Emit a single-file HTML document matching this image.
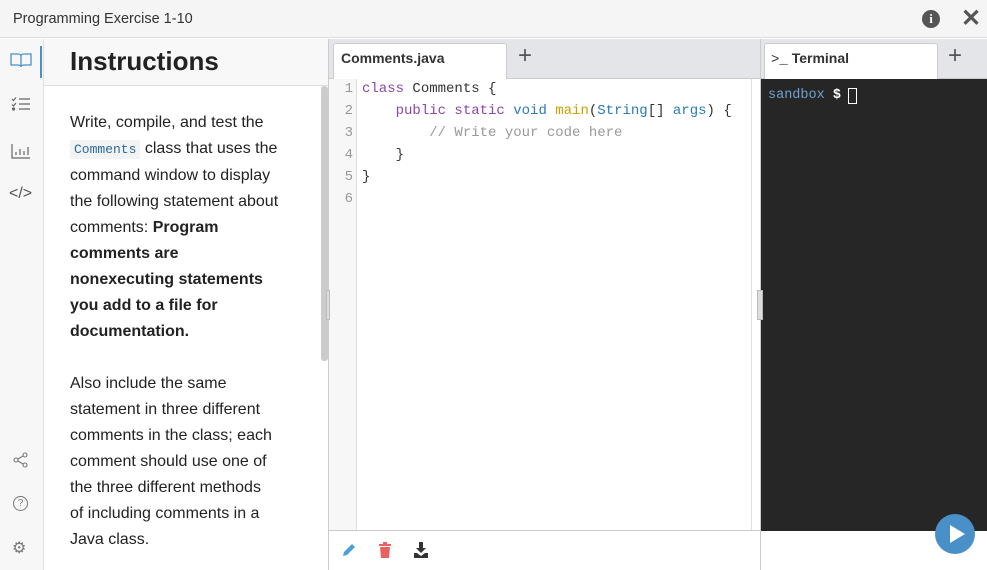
<!DOCTYPE html>
<html><head><style>
*{margin:0;padding:0;box-sizing:border-box}
body{width:987px;height:570px;overflow:hidden;background:#fff;font-family:"Liberation Sans",sans-serif;position:relative;color:#222}
.abs{position:absolute}
.mono{font-family:"Liberation Mono",monospace}
</style></head><body>
<div class="abs" style="left:0;top:0;width:987px;height:38px;background:#f5f5f5;border-bottom:1px solid #ddd"></div>
<div class="abs" style="left:13px;top:11px;font-size:14.5px;color:#333">Programming Exercise 1-10</div>
<div class="abs" style="left:922px;top:10px;width:18px;height:18px;border-radius:50%;background:#555;color:#fff;font-size:13px;font-weight:bold;text-align:center;line-height:18px;font-family:'Liberation Serif',serif">i</div>
<div class="abs" style="left:961px;top:4px;font-size:24px;font-weight:bold;color:#555">✕</div>
<div class="abs" style="left:0;top:39px;width:44px;height:531px;background:#f7f7f7;border-right:1px solid #e2e2e2"></div>
<div class="abs" style="left:40px;top:46px;width:2px;height:32px;background:#4a90c8"></div>
<svg class="abs" style="left:10px;top:52px" width="22" height="16" viewBox="0 0 22 16" fill="none" stroke="#4a90c8" stroke-width="1.3"><path d="M1 2h7c2 0 3 1 3 2v11c0-1-1-2-3-2H1z M21 2h-7c-2 0-3 1-3 2v11c0-1 1-2 3-2h7z"/></svg>
<svg class="abs" style="left:11px;top:96px" width="20" height="16" viewBox="0 0 20 16" fill="none" stroke="#666" stroke-width="1.2"><path d="M1 3l1.5 1.5L5 1.5M1 8.5l1.5 1.5L5 7M8 3h11M8 8h11M8 13h11"/><circle cx="2.5" cy="13" r="1" fill="#666"/></svg>
<svg class="abs" style="left:11px;top:143px" width="20" height="16" viewBox="0 0 20 16" fill="none" stroke="#666" stroke-width="1.2"><path d="M1 1v14h18M5 12v-3M9 12v-6M13 12v-4M17 12v-8"/></svg>
<div class="abs" style="left:9px;top:185px;font-size:16px;color:#555">&lt;/&gt;</div>
<svg class="abs" style="left:13px;top:452px" width="16" height="16" viewBox="0 0 16 16" fill="none" stroke="#777" stroke-width="1.1"><circle cx="3" cy="8" r="2"/><circle cx="12" cy="3" r="2"/><circle cx="12" cy="13" r="2"/><path d="M5 7l5-3M5 9l5 3"/></svg>
<div class="abs" style="left:13px;top:496px;width:15px;height:15px;border:1.2px solid #777;border-radius:50%;font-size:10px;text-align:center;line-height:13px;color:#777">?</div>
<div class="abs" style="left:12px;top:538px;font-size:16px;color:#777">⚙</div>
<div class="abs" style="left:44px;top:39px;width:284px;height:47px;background:#f8f8f8;border-bottom:1px solid #e0e0e0"></div>
<div class="abs" style="left:70px;top:46px;font-size:26px;font-weight:bold;color:#222">Instructions</div>
<div class="abs" style="left:321px;top:86px;width:7px;height:275px;background:#ccc;border-radius:3px"></div>
<div class="abs" style="left:70px;top:110px;width:250px;font-size:16px;line-height:26px;color:#222;white-space:nowrap">
Write, compile, and test the<br><span class="mono" style="background:#f3f3f3;color:#2a6a9a;font-size:13px;padding:2px 4px">Comments</span> class that uses the<br>command window to display<br>the following statement about<br>comments: <b>Program<br>comments are<br>nonexecuting statements<br>you add to a file for<br>documentation.</b><br><br>Also include the same<br>statement in three different<br>comments in the class; each<br>comment should use one of<br>the three different methods<br>of including comments in a<br>Java class.</div>
<div class="abs" style="left:328px;top:39px;width:1px;height:531px;background:#ccc"></div>
<div class="abs" style="left:329px;top:39px;width:431px;height:40px;background:#e3e5e9;border-bottom:1px solid #ccc"></div>
<div class="abs" style="left:333px;top:43px;width:174px;height:36px;background:#fff;border:1px solid #ccc;border-bottom:none;border-radius:3px 3px 0 0"></div>
<div class="abs" style="left:341px;top:50px;font-size:14px;font-weight:bold;color:#333">Comments.java</div>
<div class="abs" style="left:518px;top:42px;font-size:24px;color:#555">+</div>
<div class="abs" style="left:329px;top:79px;width:28px;height:452px;background:#f7f7f7;border-right:1px solid #ddd"></div>
<div class="abs mono" style="left:331px;top:78px;width:22px;text-align:right;font-size:14px;line-height:22px;color:#999">1<br>2<br>3<br>4<br>5<br>6</div>
<pre class="abs mono" style="left:362px;top:78px;font-size:14px;line-height:22px;color:#333"><span style="color:#8e44ad">class</span> Comments {
    <span style="color:#8e44ad">public static</span> <span style="color:#2a7ab8">void</span> <span style="color:#c9a000">main</span>(<span style="color:#2a7ab8">String</span>[] <span style="color:#2a7ab8">args</span>) {
        <span style="color:#999">// Write your code here</span>
    }
}</pre>
<div class="abs" style="left:751px;top:79px;width:1px;height:452px;background:#ddd"></div>
<div class="abs" style="left:329px;top:530px;width:431px;height:1px;background:#ccc"></div>
<svg class="abs" style="left:341px;top:542px" width="16" height="16" viewBox="0 0 16 16"><path d="M2 14l1-4 8-8 3 3-8 8z" fill="#4a9fd8"/></svg>
<svg class="abs" style="left:378px;top:542px" width="14" height="16" viewBox="0 0 14 16"><path d="M1 2h12v2H1zM5 0h4v2H5zM2 5h10l-1 11H3z" fill="#e86060"/></svg>
<svg class="abs" style="left:413px;top:542px" width="16" height="16" viewBox="0 0 16 16"><path d="M6 0h4v6h3l-5 5-5-5h3z M1 11h3l4 3 4-3h3v5H1z" fill="#333"/></svg>
<div class="abs" style="left:326px;top:290px;width:4px;height:30px;background:#ddd;border:1px solid #bbb"></div>
<div class="abs" style="left:760px;top:39px;width:1px;height:531px;background:#ccc"></div>
<div class="abs" style="left:761px;top:39px;width:226px;height:40px;background:#e3e5e9;border-bottom:1px solid #ccc"></div>
<div class="abs" style="left:764px;top:43px;width:174px;height:36px;background:#fff;border:1px solid #ccc;border-bottom:none;border-radius:3px 3px 0 0"></div>
<div class="abs" style="left:771px;top:50px;font-size:14px;font-weight:bold;color:#333"><span class="mono" style="font-weight:normal">&gt;_</span> Terminal</div>
<div class="abs" style="left:948px;top:42px;font-size:24px;color:#555">+</div>
<div class="abs" style="left:761px;top:79px;width:226px;height:452px;background:#262626"></div>
<div class="abs mono" style="left:768px;top:88px;font-size:13.5px;color:#6fa0d0">sandbox <span style="color:#fff;font-weight:bold">$</span></div>
<div class="abs" style="left:848px;top:88px;width:9px;height:16px;border:1px solid #fff"></div>
<div class="abs" style="left:757px;top:290px;width:6px;height:30px;background:#ddd;border:1px solid #bbb"></div>
<div class="abs" style="left:935px;top:514px;width:40px;height:40px;border-radius:50%;background:#4a90c8"></div>
<svg class="abs" style="left:946px;top:523px" width="22" height="22" viewBox="0 0 22 22"><path d="M4 2l15 9-15 9z" fill="#fff"/></svg>
</body></html>
